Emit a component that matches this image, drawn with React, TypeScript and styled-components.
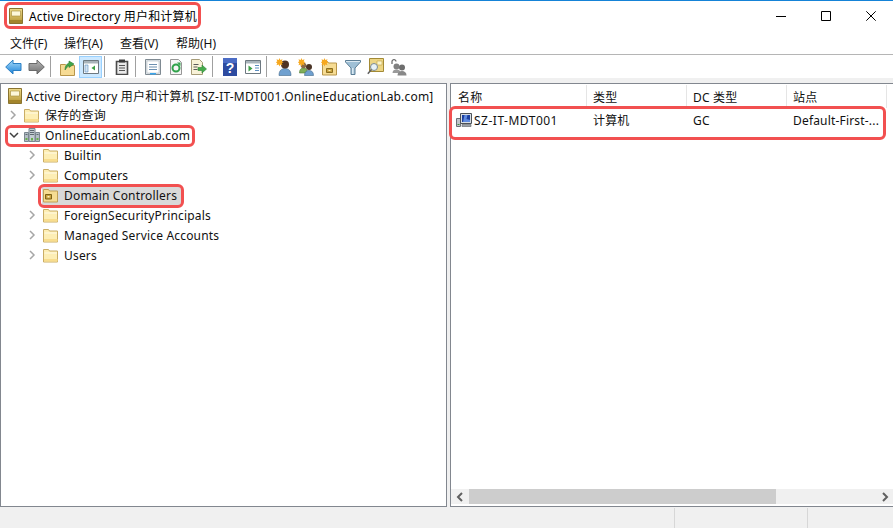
import React from 'react';
import styled, { createGlobalStyle } from 'styled-components';

const GlobalStyle = createGlobalStyle`
  html, body {
    margin: 0;
    padding: 0;
    background: #f0f0f0;
  }
  * {
    box-sizing: border-box;
  }
`;

const Window = styled.div`
  width: 893px;
  height: 528px;
  display: flex;
  flex-direction: column;
  overflow: hidden;
  background: #f0f0f0;
  color: #111;
  font-family: "Noto Sans", "Noto Sans CJK SC", sans-serif;
  font-size: 12px;
  letter-spacing: 0.18px;
`;

const TitleBar = styled.div`
  height: 31px;
  flex: none;
  display: flex;
  align-items: center;
  justify-content: space-between;
  background: #fff;
  border-top: 1px solid #1583d7;
`;

const TitleGroup = styled.div`
  position: relative;
  display: flex;
  align-items: center;
  gap: 5px;
  margin-left: 8px;
  height: 20px;
  color: #000;
`;

const Controls = styled.div`
  display: flex;
`;

const ControlButton = styled.div`
  width: 45px;
  height: 30px;
  display: flex;
  align-items: center;
  justify-content: center;
`;

const MenuBar = styled.div`
  height: 24px;
  flex: none;
  display: flex;
  align-items: center;
  padding-left: 2px;
  background: #fff;
  border-bottom: 1px solid #b5b5b5;
`;

const MenuItem = styled.div`
  width: 56px;
  padding-left: 8px;
  white-space: nowrap;
  letter-spacing: 0;

  &:first-child {
    width: 54px;
  }
`;

const Toolbar = styled.div`
  height: 23px;
  flex: none;
  display: flex;
  align-items: center;
  padding-left: 2px;
  background: #fff;
`;

const ToolButton = styled.div<{ $active?: boolean }>`
  width: 23px;
  height: 22px;
  display: flex;
  align-items: center;
  justify-content: center;
  background: ${p => (p.$active ? '#cce8ff' : 'transparent')};
  border: 1px solid ${p => (p.$active ? '#99d1ff' : 'transparent')};
`;

const ToolSeparator = styled.div`
  width: 8px;
  height: 21px;
  flex: none;
  padding-left: 2px;

  &::before {
    content: '';
    display: block;
    width: 1px;
    height: 100%;
    background: #a0a0a0;
  }
`;

const Main = styled.div`
  flex: 1;
  min-height: 0;
  display: flex;
  gap: 3px;
  padding-top: 5px;
`;

const TreePanel = styled.div`
  width: 447px;
  flex: none;
  background: #fff;
  border: 1px solid #82878f;
  padding-top: 1px;
`;

const ListPanel = styled.div`
  flex: 1;
  min-width: 0;
  display: flex;
  flex-direction: column;
  background: #fff;
  border: 1px solid #82878f;
  border-right: none;
`;

const TreeRow = styled.div<{ $level: number }>`
  position: relative;
  height: 20px;
  display: flex;
  align-items: center;
  padding-left: ${p => (p.$level === 0 ? 6 : 19 * (p.$level - 1) + 6)}px;
  white-space: nowrap;
`;

const TreeRootRow = styled(TreeRow)`
  padding-top: 2px;
`;

const Expander = styled.span`
  width: 17px;
  height: 16px;
  flex: none;
  display: flex;
  align-items: center;
  padding-left: 2px;
`;

const TreeLabel = styled.span<{ $gap: number }>`
  margin-left: ${p => p.$gap}px;
`;

const SelectedBack = styled.span`
  position: absolute;
  left: 41px;
  top: 1px;
  width: 139px;
  height: 20px;
  background: #d9d9d9;
`;

const TreeContent = styled.span`
  position: relative;
  display: flex;
  align-items: center;
`;

const Highlight = styled.span<{ $left: number; $top: number; $width: number; $height: number }>`
  position: absolute;
  left: ${p => p.$left}px;
  top: ${p => p.$top}px;
  width: ${p => p.$width}px;
  height: ${p => p.$height}px;
  border: 3px solid #f25050;
  border-radius: 6px;
  pointer-events: none;
`;

const HeaderRow = styled.div`
  height: 23px;
  flex: none;
  display: flex;
  margin-top: 1px;
`;

const HeaderCell = styled.div<{ $width: number }>`
  width: ${p => p.$width}px;
  flex: none;
  display: flex;
  align-items: center;
  padding-left: 6px;
  padding-top: 1px;
  border-right: 1px solid #e5e5e5;
  white-space: nowrap;

  &:first-child {
    padding-left: 7px;
  }
`;

const ListBody = styled.div`
  flex: 1;
  min-height: 0;
  padding-top: 2px;
`;

const ListRow = styled.div`
  position: relative;
  height: 20px;
  display: flex;
  align-items: center;
`;

const ListCell = styled.div<{ $width: number }>`
  width: ${p => p.$width}px;
  flex: none;
  display: flex;
  align-items: center;
  gap: 2px;
  padding-left: 6px;
  white-space: nowrap;
`;

const NameCell = styled(ListCell)`
  padding-left: 5px;
  letter-spacing: 0.5px;
`;

const ScrollBar = styled.div`
  height: 15px;
  flex: none;
  margin-bottom: 2px;
  display: flex;
  align-items: center;
  background: #f0f0f0;
`;

const ScrollArrow = styled.div`
  width: 17px;
  height: 15px;
  flex: none;
  display: flex;
  align-items: center;
  justify-content: center;

  &:first-child {
    width: 18px;
  }
`;

const ScrollTrack = styled.div`
  flex: 1;
  height: 15px;
`;

const ScrollThumb = styled.div`
  width: 307px;
  height: 15px;
  background: #cdcdcd;
`;

const StatusBar = styled.div`
  height: 21px;
  flex: none;
  display: flex;
  padding-top: 1px;
  background: #f0f0f0;
`;

const StatusCell = styled.div<{ $width: number }>`
  width: ${p => p.$width}px;
  flex: none;
  border-right: 1px solid #d7d7d7;
`;

const Folder = () => (
  <svg width="16" height="16" viewBox="0 0 16 16">
    <path d="M.5 2.500h5l1 1.500h8v11H.5z" fill="#fdeeb4" stroke="#c9ad66" />
    <path d="M1.500 5.500h12.500v1H1.500z" fill="#fffbe6" />
    <path d="M1 12h13.500v2.500H1z" fill="#f8dd8e" />
  </svg>
);

const OuFolder = () => (
  <svg width="16" height="16" viewBox="0 0 16 16">
    <path d="M.5 2.500h5l1 1.500h8v11H.5z" fill="#f6dc92" stroke="#c0a055" />
    <path d="M2.500 7.500h6v4.500h-6z" fill="#c9a23c" stroke="#7d6218" />
    <path d="M4.500 9h2v1.500h-2z" fill="#fff2c0" />
  </svg>
);

const SnapIn = () => (
  <svg width="16" height="16" viewBox="0 0 16 16">
    <defs>
      <linearGradient id="snapGold" x1="0" y1="0" x2="0" y2="1">
        <stop offset="0" stopColor="#efdc8e" />
        <stop offset="1" stopColor="#b39432" />
      </linearGradient>
    </defs>
    <path d="M1.500 .5h13v15h-13z" fill="url(#snapGold)" stroke="#8a7430" />
    <path d="M3.500 3h9v5h-9z" fill="#fdf8da" stroke="#a38a35" strokeWidth=".6" />
    <path d="M2 12h12v3H2z" fill="#a3852b" />
  </svg>
);

const Domain = () => (
  <svg width="16" height="16" viewBox="0 0 16 16">
    <path d="M5 1.500h6v13H5z" fill="#c3ccd2" stroke="#7b8790" />
    <path d="M.5 5.500h4v9h-4zM11.500 5.500h4v9h-4z" fill="#b3bdc4" stroke="#7b8790" />
    <path d="M6 3h4v1H6zM6 5h4v1H6zM6 7h4v1H6zM1.500 7h2v1h-2zM12.500 7h2v1h-2z" fill="#5e6a72" />
    <path d="M7 11h2v2.500H7zM1.500 11h2v2h-2zM12.500 11h2v2h-2z" fill="#67b04a" />
  </svg>
);

const Computer = () => (
  <svg width="16" height="16" viewBox="0 0 16 16">
    <path d="M.5 6.500h4v8h-4z" fill="#bfc4c9" stroke="#6a7076" />
    <path d="M1.500 12h2v1h-2z" fill="#3f8f3f" />
    <path d="M4.500 1.500h11v10h-11z" fill="#d7dde3" stroke="#4c5157" />
    <path d="M6 3h8v7H6z" fill="#1c3f9e" />
    <path d="M8.500 3h3l-1 4 3.500 1v2H7z" fill="#5f8be0" />
    <path d="M6 12.500h9v2H6z" fill="#9aa0a6" stroke="#5e6368" strokeWidth=".6" />
  </svg>
);

const Minimize = () => (
  <svg width="10" height="10" viewBox="0 0 10 10">
    <path d="M0 5.500h10" stroke="#000" />
  </svg>
);

const Maximize = () => (
  <svg width="10" height="10" viewBox="0 0 10 10">
    <path d="M.5 .5h9v9h-9z" fill="none" stroke="#000" />
  </svg>
);

const Close = () => (
  <svg width="10" height="10" viewBox="0 0 10 10">
    <path d="M.3 .3l9.400 9.400M9.700 .3L.3 9.700" stroke="#000" />
  </svg>
);

const ChevronRight = () => (
  <svg width="8" height="10" viewBox="0 0 8 10">
    <path d="M2 1l4 4-4 4" fill="none" stroke="#a6a6a6" strokeWidth="1.500" />
  </svg>
);

const ChevronDown = () => (
  <svg width="10" height="8" viewBox="0 0 10 8">
    <path d="M1 2l4 4 4-4" fill="none" stroke="#404040" strokeWidth="1.500" />
  </svg>
);

const Back = () => (
  <svg width="17" height="16" viewBox="0 0 17 16">
    <defs>
      <linearGradient id="backBlue" x1="0" y1="0" x2="0" y2="1">
        <stop offset="0" stopColor="#a9dcfa" />
        <stop offset="1" stopColor="#1c82d8" />
      </linearGradient>
    </defs>
    <path d="M8 1L.7 8 8 15v-3.500h8v-7H8z" fill="url(#backBlue)" stroke="#2a7fc4" />
  </svg>
);

const Forward = () => (
  <svg width="17" height="16" viewBox="0 0 17 16">
    <defs>
      <linearGradient id="forwardGray" x1="0" y1="0" x2="0" y2="1">
        <stop offset="0" stopColor="#b8b8b8" />
        <stop offset="1" stopColor="#6f6f6f" />
      </linearGradient>
    </defs>
    <path d="M9 1l7.300 7L9 15v-3.500H1v-7h8z" fill="url(#forwardGray)" stroke="#6a6a6a" />
  </svg>
);

const FolderUp = () => (
  <svg width="16" height="18" viewBox="0 0 16 18">
    <path d="M.5 6.500h5l1 1h8v10H.5z" fill="#f6db94" stroke="#b8964a" />
    <path d="M5 12c0-4 1.500-6 4-7V3l5 3-5 3.500V7.500C7.500 8.500 6.500 10 5 12z" fill="#3fa64a" stroke="#2a7a34" strokeWidth=".6" />
  </svg>
);

const ConsoleTree = () => (
  <svg width="16" height="16" viewBox="0 0 16 16">
    <path d="M.5 1.500h15v13H.5z" fill="#fff" stroke="#6d7880" />
    <path d="M1 2h14v2.500H1z" fill="#a9b4bb" />
    <path d="M2 6h3v7H2z" fill="#d3e4f3" stroke="#5d8fc0" strokeWidth=".6" />
    <path d="M12 6.500v5L8.500 9z" fill="#3c9e46" />
  </svg>
);

const Clipboard = () => (
  <svg width="14" height="16" viewBox="0 0 14 16">
    <path d="M1.500 2.500h11v13h-11z" fill="#e9e9e9" stroke="#4a4a4a" strokeWidth="1.600" />
    <path d="M4 .5h6V3.500H4z" fill="#3a3a3a" />
    <path d="M4 6h6v1H4zM4 8.500h6v1H4zM4 11h6v1H4z" fill="#555" />
  </svg>
);

const Properties = () => (
  <svg width="16" height="16" viewBox="0 0 16 16">
    <path d="M.5 .5h15v15H.5z" fill="#dde2e6" stroke="#7f8a92" />
    <path d="M2 2h12v12H2z" fill="#fff" stroke="#b3bcc2" strokeWidth=".6" />
    <path d="M4 5h8v1H4zM4 7.500h8v1H4zM4 10h8v1H4z" fill="#6c8fb0" />
    <path d="M5 14h6v1.500H5z" fill="#39a5ec" />
  </svg>
);

const Refresh = () => (
  <svg width="16" height="16" viewBox="0 0 16 16">
    <path d="M2.500 .5h8l3 3v12h-11z" fill="#f5f5f5" stroke="#969696" />
    <circle cx="8" cy="9" r="3.500" fill="none" stroke="#2fa24a" strokeWidth="2" />
    <path d="M9 3.500h3.500V7z" fill="#2fa24a" />
  </svg>
);

const Export = () => (
  <svg width="17" height="16" viewBox="0 0 17 16">
    <path d="M1.500 .5h8l3 3v12h-11z" fill="#f8f2d8" stroke="#a69c78" />
    <path d="M3.500 5h5v1h-5zM3.500 7.500h4v1h-4zM3.500 10h4v1h-4z" fill="#5a5a5a" />
    <path d="M8 8.500h4V6l4.500 4-4.500 4v-2.500H8z" fill="#45ab4c" stroke="#2f8437" strokeWidth=".6" />
  </svg>
);

const Help = () => (
  <svg width="14" height="18" viewBox="0 0 14 18">
    <path d="M0 0h14v18H0z" fill="#2d4ba0" />
    <path d="M0 0h14v5H0z" fill="#4b6cc5" />
    <text x="7" y="14.500" textAnchor="middle" fontFamily="Liberation Sans, sans-serif" fontSize="14" fontWeight="700" fill="#fff">?</text>
  </svg>
);

const ConsoleAction = () => (
  <svg width="16" height="16" viewBox="0 0 16 16">
    <path d="M.5 1.500h15v13H.5z" fill="#fff" stroke="#6d7880" />
    <path d="M1 2h14v2.500H1z" fill="#a9b4bb" />
    <path d="M3.500 6.500v6L7.500 9.500z" fill="#3c9e46" />
    <path d="M10 6h4v1h-4zM10 8.500h4v1h-4zM10 11h4v1h-4z" fill="#5d8fc0" />
  </svg>
);

const Star = () => (
  <path d="M3.500 0l.8 2 2.200-.8-.8 2.300 2 .8-2 .8.8 2.200-2.200-.8-.8 2-.8-2-2.200.8.8-2.200-2-.8 2-.8-.8-2.300 2.200.8z" fill="#f7a81e" />
);

const NewUser = () => (
  <svg width="16" height="18" viewBox="0 0 16 18">
    <path d="M3 17.500c0-5 2.500-7 6-7s6 2 6 7z" fill="#6fa0cf" stroke="#41688c" strokeWidth=".6" />
    <circle cx="9" cy="6.500" r="4" fill="#4f3324" />
    <Star />
  </svg>
);

const NewGroup = () => (
  <svg width="17" height="18" viewBox="0 0 17 18">
    <path d="M1.500 15c0-3.500 1.500-5 4-5s4 1.500 4 5z" fill="#7fae58" stroke="#4f7a33" strokeWidth=".6" />
    <circle cx="5.500" cy="7.500" r="2.800" fill="#8a6a48" />
    <path d="M6.500 17.500c0-3.500 1.800-5 4.500-5s4.500 1.500 4.500 5z" fill="#6fa0cf" stroke="#41688c" strokeWidth=".6" />
    <circle cx="11" cy="9" r="3" fill="#4a3426" />
    <Star />
  </svg>
);

const NewOu = () => (
  <svg width="17" height="18" viewBox="0 0 17 18">
    <path d="M1.500 3.500h5l1 1.500h8v12h-14z" fill="#f6dc94" stroke="#b8964a" />
    <path d="M5.500 10.500h6v4h-6z" fill="#c9a23c" stroke="#8a6d1e" />
    <path d="M7.500 12h2v1h-2z" fill="#fff2c0" />
    <Star />
  </svg>
);

const Filter = () => (
  <svg width="16" height="16" viewBox="0 0 16 16">
    <path d="M.5 1.500h15v1.500L10 9v6.500H6V9L.5 3z" fill="#9fc0d6" stroke="#5d7f96" />
    <path d="M1 2h14v1H1z" fill="#dbe9f2" />
    <path d="M7 9h1.500v6H7z" fill="#dbe9f2" />
  </svg>
);

const FindObject = () => (
  <svg width="17" height="17" viewBox="0 0 17 17">
    <path d="M2.500 .5h14v13h-14z" fill="#ecd584" stroke="#a38a35" />
    <path d="M10 3h5v4h-5z" fill="#fbf4c8" stroke="#bfa24a" strokeWidth=".6" />
    <circle cx="7" cy="9" r="3.500" fill="#e7f2f8" stroke="#7c8a92" />
    <path d="M4.500 11.500L.8 15.800" stroke="#5f5f5f" strokeWidth="1.500" />
  </svg>
);

const GroupLock = () => (
  <svg width="17" height="18" viewBox="0 0 17 18">
    <path d="M2 6V3.500C2 1 6 1 6 3.500" fill="none" stroke="#666" strokeWidth="1.200" />
    <circle cx="6.500" cy="8.500" r="3" fill="#808080" />
    <circle cx="12" cy="9.500" r="3" fill="#6e6e6e" />
    <path d="M2.500 15c0-2.500 1.700-3.500 4-3.500s4 1 4 3.500z" fill="#9a9a9a" />
    <path d="M7.500 17.500c0-3 1.800-4.500 4.500-4.500s4.500 1.500 4.500 4.500z" fill="#888" />
  </svg>
);

const SmallLeft = () => (
  <svg width="8" height="10" viewBox="0 0 8 10">
    <path d="M6 1L2 5l4 4" fill="none" stroke="#606060" strokeWidth="2" />
  </svg>
);

const SmallRight = () => (
  <svg width="8" height="10" viewBox="0 0 8 10">
    <path d="M2 1l4 4-4 4" fill="none" stroke="#606060" strokeWidth="2" />
  </svg>
);

const menus = ['文件(F)', '操作(A)', '查看(V)', '帮助(H)'];
const ous = ['Builtin', 'Computers', 'Domain Controllers', 'ForeignSecurityPrincipals', 'Managed Service Accounts', 'Users'];
const columns = [
  { label: '名称', width: 136 },
  { label: '类型', width: 100 },
  { label: 'DC 类型', width: 100 },
  { label: '站点', width: 100 },
];

const App: React.FC = () => {
  return (
    <Window>
      <GlobalStyle />
      <TitleBar>
        <TitleGroup>
          <Highlight $left={-4} $top={-4} $width={197} $height={27} />
          <SnapIn />
          Active Directory 用户和计算机
        </TitleGroup>
        <Controls>
          <ControlButton><Minimize /></ControlButton>
          <ControlButton><Maximize /></ControlButton>
          <ControlButton><Close /></ControlButton>
        </Controls>
      </TitleBar>

      <MenuBar>
        {menus.map(m => <MenuItem key={m}>{m}</MenuItem>)}
      </MenuBar>

      <Toolbar>
        <ToolButton><Back /></ToolButton>
        <ToolButton><Forward /></ToolButton>
        <ToolSeparator />
        <ToolButton><FolderUp /></ToolButton>
        <ToolButton $active><ConsoleTree /></ToolButton>
        <ToolSeparator />
        <ToolButton><Clipboard /></ToolButton>
        <ToolSeparator />
        <ToolButton><Properties /></ToolButton>
        <ToolButton><Refresh /></ToolButton>
        <ToolButton><Export /></ToolButton>
        <ToolSeparator />
        <ToolButton><Help /></ToolButton>
        <ToolButton><ConsoleAction /></ToolButton>
        <ToolSeparator />
        <ToolButton><NewUser /></ToolButton>
        <ToolButton><NewGroup /></ToolButton>
        <ToolButton><NewOu /></ToolButton>
        <ToolButton><Filter /></ToolButton>
        <ToolButton><FindObject /></ToolButton>
        <ToolButton><GroupLock /></ToolButton>
      </Toolbar>

      <Main>
        <TreePanel>
          <TreeRootRow $level={0}>
            <SnapIn />
            <TreeLabel $gap={3}>Active Directory 用户和计算机 [SZ-IT-MDT001.OnlineEducationLab.com]</TreeLabel>
          </TreeRootRow>
          <TreeRow $level={1}>
            <Expander><ChevronRight /></Expander>
            <Folder />
            <TreeLabel $gap={5}>保存的查询</TreeLabel>
          </TreeRow>
          <TreeRow $level={1}>
            <Highlight $left={4} $top={0} $width={190} $height={22} />
            <Expander><ChevronDown /></Expander>
            <Domain />
            <TreeLabel $gap={5}>OnlineEducationLab.com</TreeLabel>
          </TreeRow>
          {ous.map(name => {
            const selected = name === 'Domain Controllers';
            return (
              <TreeRow $level={2} key={name}>
                {selected && <SelectedBack />}
                {selected && <Highlight $left={37} $top={-1} $width={146} $height={24} />}
                <Expander>{!selected && <ChevronRight />}</Expander>
                <TreeContent>
                  {selected ? <OuFolder /> : <Folder />}
                  <TreeLabel $gap={5}>{name}</TreeLabel>
                </TreeContent>
              </TreeRow>
            );
          })}
        </TreePanel>

        <ListPanel>
          <HeaderRow>
            {columns.map(c => (
              <HeaderCell $width={c.width} key={c.label}>{c.label}</HeaderCell>
            ))}
          </HeaderRow>
          <ListBody>
            <ListRow>
              <Highlight $left={-2} $top={-4} $width={437} $height={34} />
              <NameCell $width={136}>
                <Computer />
                SZ-IT-MDT001
              </NameCell>
              <ListCell $width={100}>计算机</ListCell>
              <ListCell $width={100}>GC</ListCell>
              <ListCell $width={100}>Default-First-...</ListCell>
            </ListRow>
          </ListBody>
          <ScrollBar>
            <ScrollArrow><SmallLeft /></ScrollArrow>
            <ScrollTrack><ScrollThumb /></ScrollTrack>
            <ScrollArrow><SmallRight /></ScrollArrow>
          </ScrollBar>
        </ListPanel>
      </Main>

      <StatusBar>
        <StatusCell $width={675} />
        <StatusCell $width={133} />
      </StatusBar>
    </Window>
  );
};

export default App;
